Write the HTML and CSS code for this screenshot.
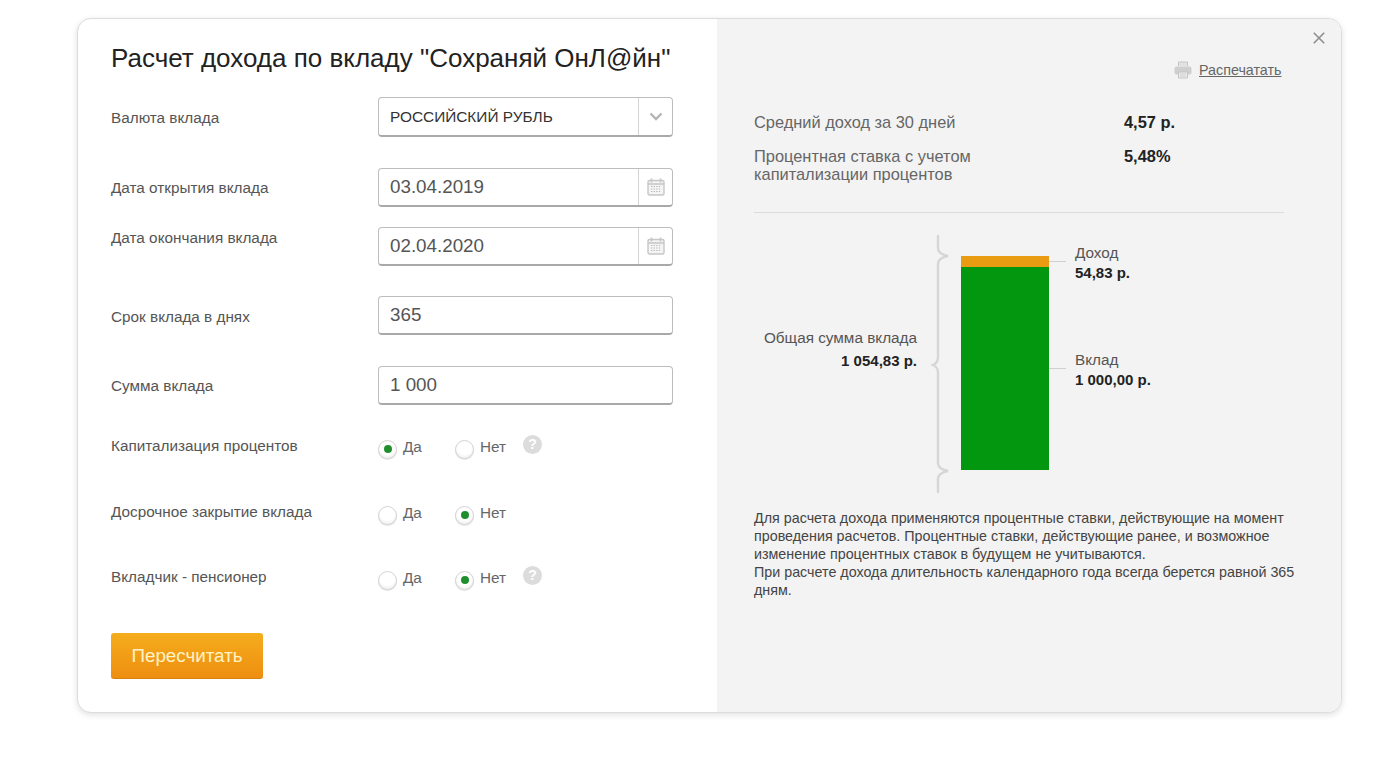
FILE: index.html
```html
<!DOCTYPE html>
<html lang="ru">
<head>
<meta charset="utf-8">
<title>Расчет дохода по вкладу</title>
<link rel="stylesheet" href="styles.css">
</head>
<body>
<main class="card">
  <section class="left">
    <h1 class="title">Расчет дохода по вкладу "Сохраняй ОнЛ@йн"</h1>
    <div class="row row-currency">
      <span class="label">Валюта вклада</span>
      <div class="field field-select"><span class="select-text">РОССИЙСКИЙ РУБЛЬ</span>
        <span class="addon"><svg width="14" height="9" viewBox="0 0 14 9"><path d="M1.5 1.5 7 7l5.5-5.5" fill="none" stroke="#b4b4b4" stroke-width="2.4"/></svg></span>
      </div>
    </div>
    <div class="row row-open">
      <span class="label">Дата открытия вклада</span>
      <div class="field field-date"><span>03.04.2019</span>
        <span class="addon"><svg width="18" height="18" viewBox="0 0 18 18"><use href="#cal"/></svg></span>
      </div>
    </div>
    <div class="row row-close">
      <span class="label label-high">Дата окончания вклада</span>
      <div class="field field-date"><span>02.04.2020</span>
        <span class="addon"><svg width="18" height="18" viewBox="0 0 18 18"><use href="#cal"/></svg></span>
      </div>
    </div>
    <div class="row row-days">
      <span class="label">Срок вклада в днях</span>
      <div class="field field-plain">365</div>
    </div>
    <div class="row row-sum">
      <span class="label">Сумма вклада</span>
      <div class="field field-plain">1 000</div>
    </div>
    <div class="row row-radio row-cap">
      <span class="label">Капитализация процентов</span>
      <div class="radios">
        <span class="radio-item"><i class="radio on"></i>Да</span>
        <span class="radio-item"><i class="radio"></i>Нет</span>
        <span class="help">?</span>
      </div>
    </div>
    <div class="row row-radio row-early">
      <span class="label">Досрочное закрытие вклада</span>
      <div class="radios">
        <span class="radio-item"><i class="radio"></i>Да</span>
        <span class="radio-item"><i class="radio on"></i>Нет</span>
      </div>
    </div>
    <div class="row row-radio row-pens">
      <span class="label">Вкладчик - пенсионер</span>
      <div class="radios">
        <span class="radio-item"><i class="radio"></i>Да</span>
        <span class="radio-item"><i class="radio on"></i>Нет</span>
        <span class="help">?</span>
      </div>
    </div>
    <button class="btn" type="button">Пересчитать</button>
  </section>
  <section class="right">
    <button class="close" type="button" aria-label="Закрыть"><svg width="12" height="12" viewBox="0 0 12 12"><path d="M.8.8l10.4 10.4M11.2.8.8 11.2" stroke="#8e8e8e" stroke-width="1.6" fill="none"/></svg></button>
    <div class="print">
      <svg width="18" height="18" viewBox="0 0 18 18"><path d="M4.5 5V1h9v4" fill="#e2e2e2" stroke="#c4c4c4"/><rect x=".5" y="5.5" width="17" height="8" rx="2" fill="#cfcfcf"/><path d="M4.5 11h9v6h-9z" fill="#ececec" stroke="#c4c4c4"/><path d="M6 13h6M6 15h6" stroke="#cfcfcf"/></svg>
      <a class="print-link" href="#">Распечатать</a>
    </div>
    <dl class="stats">
      <div class="stat stat-first"><dt>Средний доход за 30 дней</dt><dd>4,57 р.</dd></div>
      <div class="stat"><dt>Процентная ставка с учетом капитализации процентов</dt><dd>5,48%</dd></div>
    </dl>
    <hr class="divider">
    <div class="chart">
      <div class="total">
        <div class="total-name">Общая сумма вклада</div>
        <div class="amount">1 054,83 р.</div>
      </div>
      <svg class="brace" width="18" height="260" viewBox="0 0 18 260"><path d="M7 1v13q0 6 10 8q-10 2-10 8v93q0 6-5 8q5 2 5 8v90q0 6 10 8q-10 2-10 8v14" fill="none" stroke="#d6d6d6" stroke-width="2.4"/></svg>
      <div class="bar"><div class="bar-income"></div><div class="bar-deposit"></div></div>
      <div class="legend">
        <div class="legend-item legend-income"><div>Доход</div><div class="amount">54,83 р.</div></div>
        <div class="legend-item legend-deposit"><div>Вклад</div><div class="amount">1 000,00 р.</div></div>
      </div>
    </div>
    <p class="note">Для расчета дохода применяются процентные ставки, действующие на момент проведения расчетов. Процентные ставки, действующие ранее, и возможное изменение процентных ставок в будущем не учитываются.<br>При расчете дохода длительность календарного года всегда берется равной 365 дням.</p>
  </section>
</main>
<svg class="defs" width="0" height="0"><defs><g id="cal"><rect x="1" y="2.5" width="16" height="14.5" rx="1.5" fill="#f4f4f4" stroke="#c6c6c6" stroke-width="1.4"/><path d="M1 6h16" stroke="#c6c6c6" stroke-width="1.4"/><path d="M4.5.5v4M13.5.5v4" stroke="#c6c6c6" stroke-width="1.6"/><path d="M4 8.5h10M4 11h10M4 13.5h10" stroke="#bcbcbc" stroke-width="1.2" stroke-dasharray="1.4 1.2"/></g></defs></svg>
</body>
</html>
```
FILE: styles.css
```css
* { box-sizing: border-box; }
html, body { margin: 0; padding: 0; background: #fff; }
body { font-family: "Liberation Sans", Arial, sans-serif; color: #333; height: 761px; overflow: hidden; padding: 18px 0 0 77px; }
.defs { position: absolute; }
.card { width: 1265px; height: 695px; display: flex; border: 1px solid #dcdcdc; border-radius: 14px; overflow: hidden; box-shadow: 0 2px 6px rgba(0,0,0,.12); background: #fff; }
.left { width: 639px; padding: 0 0 0 33px; flex: none; }
.title { margin: 23px 0 0; font-size: 26px; line-height: 32px; font-weight: 400; color: #222; white-space: nowrap; }
.row { display: flex; width: 562px; }
.label { width: 267px; flex: none; font-size: 15.3px; color: #555; line-height: 18px; }
.field { width: 295px; border: 1px solid #bdbdbd; border-bottom: 2px solid #a9a9a9; border-radius: 4px; background: #fff; display: flex; align-items: center; padding-left: 11px; font-size: 18.8px; color: #555; }
.field-select { height: 40px; }
.field-date { height: 39px; }
.field-plain { height: 39px; }
.select-text { font-size: 15.4px; color: #333; }
.addon { margin-left: auto; width: 34px; height: 100%; border-left: 1px solid #d4d4d4; display: flex; align-items: center; justify-content: center; }
.row-currency { margin-top: 23px; }
.row-currency .label { padding-top: 12px; }
.row-open { margin-top: 31px; }
.row-open .label { padding-top: 11px; }
.row-close { margin-top: 20px; }
.row-close .label { padding-top: 2px; }
.row-days { margin-top: 30px; }
.row-days .label { padding-top: 12px; }
.row-sum { margin-top: 31px; }
.row-sum .label { padding-top: 11px; }
.row-radio { height: 24px; align-items: center; }
.row-cap { margin-top: 30px; }
.row-early { margin-top: 42px; }
.row-pens { margin-top: 41px; }
.row-radio .label { position: relative; top: -1px; }
.radios { display: flex; align-items: center; position: relative; }
.radio-item { width: 77px; display: flex; align-items: center; gap: 6px; font-size: 15.3px; color: #666; }
.radio { width: 19px; height: 19px; border-radius: 50%; border: 1px solid #d4d4d4; box-shadow: inset 0 -2px 2px rgba(0,0,0,.05), 0 1px 1px rgba(0,0,0,.1); background: #fff; display: flex; align-items: center; justify-content: center; flex: none; position: relative; top: 2px; }
.radio.on::after { content: ""; width: 8px; height: 8px; border-radius: 50%; background: #1f8f2e; }
.help { width: 19px; height: 19px; border-radius: 50%; background: #dcdcdc; color: #fff; font-weight: 700; font-size: 14px; line-height: 19px; text-align: center; margin-left: -9px; position: relative; top: -3px; }
.btn { display: block; margin-top: 43px; width: 152px; height: 46px; border: 0; border-bottom: 1px solid #d9810f; border-radius: 3px; background: linear-gradient(#f5ad1c, #ee8e11); color: #fff3c8; font: 400 18.8px "Liberation Sans", Arial, sans-serif; }
.right { flex: 1; background: #f3f3f3; padding: 42px 0 0 37px; position: relative; }
.close { position: absolute; top: 13px; right: 16px; width: 12px; height: 12px; padding: 0; border: 0; background: none; display: flex; }
.print { display: flex; align-items: center; gap: 7px; margin-left: 420px; height: 18px; }
.print-link { font-size: 14.3px; color: #666; }
.stats { margin: 34px 0 0; width: 530px; }
.stat { display: flex; font-size: 16.4px; line-height: 18px; margin-top: 16px; }
.stat-first { margin-top: 0; }
.stat dt { width: 370px; flex: none; color: #666; padding-right: 130px; }
.stat dd { margin: 0; font-weight: 700; color: #222; }
.divider { width: 530px; margin: 29px 0 0; border: 0; border-top: 1px solid #dcdcdc; }
.chart { display: flex; margin-top: 21px; height: 260px; font-size: 15.3px; line-height: 20px; color: #555; }
.total { width: 163px; flex: none; text-align: right; padding-top: 94px; }
.total-name { margin-bottom: 3px; }
.amount { font-weight: 700; color: #222; font-size: 15px; }
.brace { margin-left: 14px; flex: none; }
.bar { width: 88px; margin: 22px 0 0 12px; height: 214px; display: flex; flex-direction: column; flex: none; }
.bar-income { height: 11px; background: #e99c12; flex: none; }
.bar-deposit { flex: 1; background: #03960f; }
.legend { padding-left: 26px; position: relative; }
.legend-item { position: relative; }
.legend-item::before { content: ""; position: absolute; left: -26px; width: 17px; height: 1px; background: #d0d0d0; }
.legend-income { margin-top: 9px; }
.legend-income::before { top: 18px; }
.legend-deposit { margin-top: 67px; }
.legend-deposit::before { top: 18px; }
.note { margin: 15px 0 0; width: 545px; font-size: 14.3px; line-height: 18px; color: #444; }
```
